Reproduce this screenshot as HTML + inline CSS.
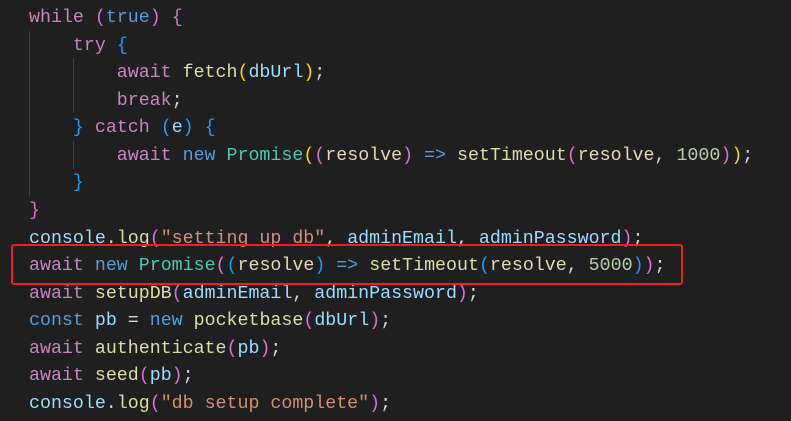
<!DOCTYPE html>
<html><head><meta charset="utf-8"><style>
body{margin:0;background:#1f1f1f;width:791px;height:421px;overflow:hidden;position:relative}
.code{margin:0;position:absolute;left:29px;top:5px;font-family:"Liberation Mono",monospace;font-size:18.3px;color:#d4d4d4}
.code div{height:27.57px;line-height:27.57px;white-space:pre}
.k{color:#c586c0}.b{color:#569cd6}.t{color:#4ec9b0}.f{color:#dcdcaa}.v{color:#9cdcfe}.p{color:#e2d9b8}.n{color:#b5cea8}.s{color:#ce9178}
.y{color:#ffd700}.m{color:#da70d6}.l{color:#179fff}
.g{position:absolute;width:1px;background:#404040}
.box{position:absolute;left:11px;top:244px;width:668px;height:37px;border:2.5px solid #f01e1e;border-radius:3px}
</style></head><body>
<div class="g" style="left:29px;top:31px;height:165px"></div>
<div class="g" style="left:73px;top:58px;height:55px"></div>
<div class="g" style="left:73px;top:141px;height:28px"></div>
<div class="code">
<div><span class="k">while</span> <span class="m">(</span><span class="b">true</span><span class="m">)</span> <span class="m">{</span></div>
<div>    <span class="k">try</span> <span class="l">{</span></div>
<div>        <span class="k">await</span> <span class="f">fetch</span><span class="y">(</span><span class="v">dbUrl</span><span class="y">)</span>;</div>
<div>        <span class="k">break</span>;</div>
<div>    <span class="l">}</span> <span class="k">catch</span> <span class="l">(</span><span class="v">e</span><span class="l">)</span> <span class="l">{</span></div>
<div>        <span class="k">await</span> <span class="b">new</span> <span class="t">Promise</span><span class="y">(</span><span class="m">(</span><span class="p">resolve</span><span class="m">)</span> <span class="b">=&gt;</span> <span class="f">setTimeout</span><span class="m">(</span><span class="p">resolve</span>, <span class="n">1000</span><span class="m">)</span><span class="y">)</span>;</div>
<div>    <span class="l">}</span></div>
<div><span class="m">}</span></div>
<div><span class="v">console</span>.<span class="f">log</span><span class="m">(</span><span class="s">"setting up db"</span>, <span class="v">adminEmail</span>, <span class="v">adminPassword</span><span class="m">)</span>;</div>
<div><span class="k">await</span> <span class="b">new</span> <span class="t">Promise</span><span class="m">(</span><span class="l">(</span><span class="p">resolve</span><span class="l">)</span> <span class="b">=&gt;</span> <span class="f">setTimeout</span><span class="l">(</span><span class="p">resolve</span>, <span class="n">5000</span><span class="l">)</span><span class="m">)</span>;</div>
<div><span class="k">await</span> <span class="f">setupDB</span><span class="m">(</span><span class="v">adminEmail</span>, <span class="v">adminPassword</span><span class="m">)</span>;</div>
<div><span class="b">const</span> <span class="v">pb</span> = <span class="b">new</span> <span class="f">pocketbase</span><span class="m">(</span><span class="v">dbUrl</span><span class="m">)</span>;</div>
<div><span class="k">await</span> <span class="f">authenticate</span><span class="m">(</span><span class="v">pb</span><span class="m">)</span>;</div>
<div><span class="k">await</span> <span class="f">seed</span><span class="m">(</span><span class="v">pb</span><span class="m">)</span>;</div>
<div><span class="v">console</span>.<span class="f">log</span><span class="m">(</span><span class="s">"db setup complete"</span><span class="m">)</span>;</div>
</div>
<div class="box"></div>
</body></html>
